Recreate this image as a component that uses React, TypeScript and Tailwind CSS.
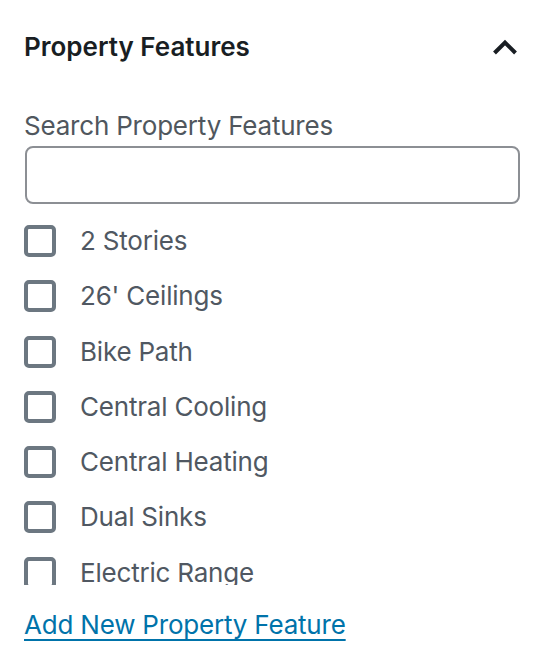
import { useState } from 'react';

const features = [
  '2 Stories',
  "26' Ceilings",
  'Bike Path',
  'Central Cooling',
  'Central Heating',
  'Dual Sinks',
  'Electric Range',
];

export default function App() {
  const [query, setQuery] = useState('');
  const [checked, setChecked] = useState<Record<string, boolean>>({});

  return (
    <div className="w-[548px] h-[672px] bg-white font-['Inter',sans-serif] overflow-hidden">
      {/* Panel header */}
      <div className="flex items-center justify-between pl-6 pr-[30px] pt-[30px] h-[64px]">
        <h2 className="text-[26px] leading-[32px] font-semibold text-[#191e23]">Property Features</h2>
        <svg width="26" height="16" viewBox="0 0 26 16" className="text-[#191e23]">
          <path d="M2.5 14 L13 3.5 L23.5 14" fill="none" stroke="currentColor" strokeWidth="4" />
        </svg>
      </div>

      {/* Panel body */}
      <div className="px-6 pt-[46px]">
        <label className="block text-[26px] leading-[32px] tracking-[-0.2px] text-[#50575e]">Search Property Features</label>
        <input
          value={query}
          onChange={(e) => setQuery(e.target.value)}
          className="mt-[4px] w-[495px] h-[58px] ml-px rounded-lg border-2 border-[#8c8f94] px-4 text-[26px] outline-none"
        />

        <div className="mt-[21px] h-[360px] overflow-hidden">
          {features
            .filter((f) => f.toLowerCase().includes(query.toLowerCase()))
            .map((f) => (
              <label key={f} className="flex items-start h-[55.3px] cursor-pointer">
                <span
                  onClick={() => setChecked({ ...checked, [f]: !checked[f] })}
                  className="w-8 h-8 shrink-0 rounded-[5px] border-4 border-[#6c7781] bg-white"
                />
                <span className="ml-[24px] text-[26px] leading-[32px] tracking-[-0.2px] text-[#505862]">{f}</span>
              </label>
            ))}
        </div>

        <a href="#" className="block w-fit mt-[24px] text-[26px] leading-[32px] tracking-[-0.2px] text-[#0073aa] underline underline-offset-[5px] decoration-2">
          Add New Property Feature
        </a>
      </div>
    </div>
  );
}
